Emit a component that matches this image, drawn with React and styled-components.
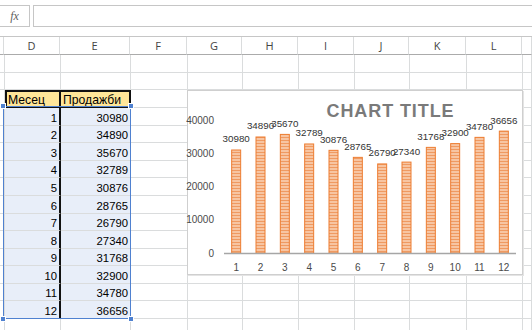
import React from 'react'
import styled, { createGlobalStyle } from 'styled-components'

const GlobalStyle = createGlobalStyle`
  html, body {
    margin: 0;
    padding: 0;
    background: #fff;
  }
  body {
    font-family: 'Liberation Sans', Arial, sans-serif;
  }
`;

const COLS = [4, 56, 70, 57, 55, 56, 56, 55, 57, 56, 0];
const LETTERS = ['', 'D', 'E', 'F', 'G', 'H', 'I', 'J', 'K', 'L', ''];
const ROW_H = [18, 17, 18, 18, 17, 18, 17, 18, 18, 17, 18, 17, 18, 17, 18, 18];
const SALES = [30980, 34890, 35670, 32789, 30876, 28765, 26790, 27340, 31768, 32900, 34780, 36656];

const Page = styled.div`
    position: relative;
    width: 532px;
    height: 330px;
    overflow: hidden;
    background: #fff;
`;

const FormulaBar = styled.div`
    display: flex;
    height: 36px;
    box-sizing: border-box;
    padding-top: 5px;
`;

const FxBox = styled.div`
    width: 30px;
    height: 22px;
    box-sizing: border-box;
    border: 1px solid #c6c6c6;
    border-left: none;
    display: flex;
    align-items: center;
    justify-content: center;
    font-family: 'Liberation Serif', serif;
    font-style: italic;
    font-size: 12px;
    color: #606060;
`;

const FormulaInput = styled.div`
    flex: 1;
    margin-left: 3px;
    height: 22px;
    box-sizing: border-box;
    border: 1px solid #c6c6c6;
    border-right: none;
`;

const Grid = styled.div`
    display: flex;
    flex-direction: column;
    border-top: 1px solid #c6c6c6;
`;

const Row = styled.div`
    display: flex;
    height: ${({ $h }) => $h}px;
`;

const ColHead = styled.div`
    flex: ${({ $w }) => ($w ? `0 0 ${$w}px` : '1 1 auto')};
    box-sizing: border-box;
    border-right: 1px solid #dadcdd;
    border-bottom: 1px solid #ababab;
    display: flex;
    align-items: center;
    justify-content: center;
    font-family: 'Open Sans', sans-serif;
    font-size: 11px;
    color: #444;
`;

const Cell = styled.div`
    flex: ${({ $w }) => ($w ? `0 0 ${$w}px` : '1 1 auto')};
    box-sizing: border-box;
    border-right: ${({ $divider }) => ($divider ? '2px solid #111' : '1px solid #dadcdd')};
    border-bottom: 1px solid #dadcdd;
    background: ${({ $bg }) => $bg || '#fff'};
    display: flex;
    align-items: flex-end;
    justify-content: ${({ $right }) => ($right ? 'flex-end' : 'flex-start')};
    padding: 0 2px 0 2px;
    font-size: 11.3px;
    line-height: 13px;
    color: #000;
    white-space: nowrap;
`;

const HeadCell = styled(Cell)`
    background: #ffe699;
    border-top: 2px solid #111;
    border-right: 2px solid #111;
    border-bottom: 1px solid #111;
    border-left: ${({ $first }) => ($first ? '2px solid #111' : 'none')};
    padding-left: ${({ $first }) => ($first ? '1px' : '2px')};
    font-size: 12.2px;
`;

const Selection = styled.div`
    position: absolute;
    left: 3px;
    top: 106px;
    width: 128px;
    height: 213px;
    box-sizing: border-box;
    border: 1.5px solid #4f81d0;
    pointer-events: none;
`;

const Handle = styled.span`
    position: absolute;
    width: 4px;
    height: 4px;
    background: #4f81d0;
    border: 1px solid #fff;
    ${({ $top }) => ($top ? 'top: -4px;' : 'bottom: -4px;')}
    ${({ $left }) => ($left ? 'left: -4px;' : 'right: -4px;')}
`;

const ChartBox = styled.div`
    position: absolute;
    left: 187px;
    top: 90px;
    width: 336px;
    height: 185px;
    box-sizing: border-box;
    background: #fff;
    border: 1px solid #cfcfcf;
    box-shadow: 1px 1px 0 #e4e4e4;
    display: flex;
    flex-direction: column;
`;

const ChartTitle = styled.div`
    padding: 11px 0 0 71px;
    height: 29px;
    box-sizing: border-box;
    text-align: center;
    font-family: 'Liberation Sans', Arial, sans-serif;
    font-weight: bold;
    font-size: 18px;
    line-height: 18px;
    letter-spacing: 0.9px;
    color: #7a7a7a;
`;

const Plot = styled.svg`
    display: block;
    overflow: visible;
    font-family: 'Liberation Sans', Arial, sans-serif;
`;

const X0 = 36;
const X1 = 328;
const ZERO = 133;
const K = 133 / 40000;

const BarChart = () => {
    const cat = (X1 - X0) / SALES.length;
    return (
        <Plot width="334" height="154">
            <defs>
                <pattern id="stripe" width="4" height="3" patternUnits="userSpaceOnUse">
                    <rect width="4" height="3" fill="#f7c5a2" />
                    <rect y="2" width="4" height="1" fill="#ef9a62" />
                </pattern>
            </defs>
            {[0, 10000, 20000, 30000, 40000].map((v) => (
                <text key={v} x="26" y={ZERO - v * K + 3.5} textAnchor="end" fontSize="10" fill="#4a4a4a">
                    {v}
                </text>
            ))}
            {SALES.map((v, i) => {
                const c = X0 + cat * (i + 0.5);
                const top = ZERO - v * K;
                return (
                    <g key={i}>
                        <rect x={c - 4.5} y={top} width="9" height={ZERO - top} fill="url(#stripe)" stroke="#ed7d31" strokeWidth="1" />
                        <text x={c} y={top - 7.5} textAnchor="middle" fontSize="9.8" fill="#333">{v}</text>
                        <text x={c} y="150.5" textAnchor="middle" fontSize="10" fill="#4a4a4a">{i + 1}</text>
                    </g>
                );
            })}
            <line x1={X0} x2={X1} y1={ZERO + 0.5} y2={ZERO + 0.5} stroke="#a6a6a6" strokeWidth="1.6" />
        </Plot>
    );
};

const renderRow = (r) => {
    if (r === 2) {
        return COLS.map((w, c) => {
            if (c === 1) return <HeadCell key={c} $w={w} $first>Месец</HeadCell>;
            if (c === 2) return <HeadCell key={c} $w={w}>Продажби</HeadCell>;
            return <Cell key={c} $w={w} />;
        });
    }
    const d = r - 3;
    const isData = d >= 0 && d < SALES.length;
    return COLS.map((w, c) => {
        if (isData && c === 1) return <Cell key={c} $w={w} $bg="#e8eef9" $right $divider>{d + 1}</Cell>;
        if (isData && c === 2) return <Cell key={c} $w={w} $bg="#e8eef9" $right>{SALES[d]}</Cell>;
        return <Cell key={c} $w={w} />;
    });
};

const App = () => {
    return (
        <Page>
            <GlobalStyle />
            <FormulaBar>
                <FxBox>fx</FxBox>
                <FormulaInput />
            </FormulaBar>
            <Grid>
                <Row $h={18}>
                    {COLS.map((w, c) => (
                        <ColHead key={c} $w={w}>{LETTERS[c]}</ColHead>
                    ))}
                </Row>
                {ROW_H.map((h, r) => (
                    <Row key={r} $h={h}>{renderRow(r)}</Row>
                ))}
            </Grid>
            <Selection>
                <Handle $top $left />
                <Handle $top />
                <Handle $left />
                <Handle />
            </Selection>
            <ChartBox>
                <ChartTitle>CHART TITLE</ChartTitle>
                <BarChart />
            </ChartBox>
        </Page>
    )
}

export default App
